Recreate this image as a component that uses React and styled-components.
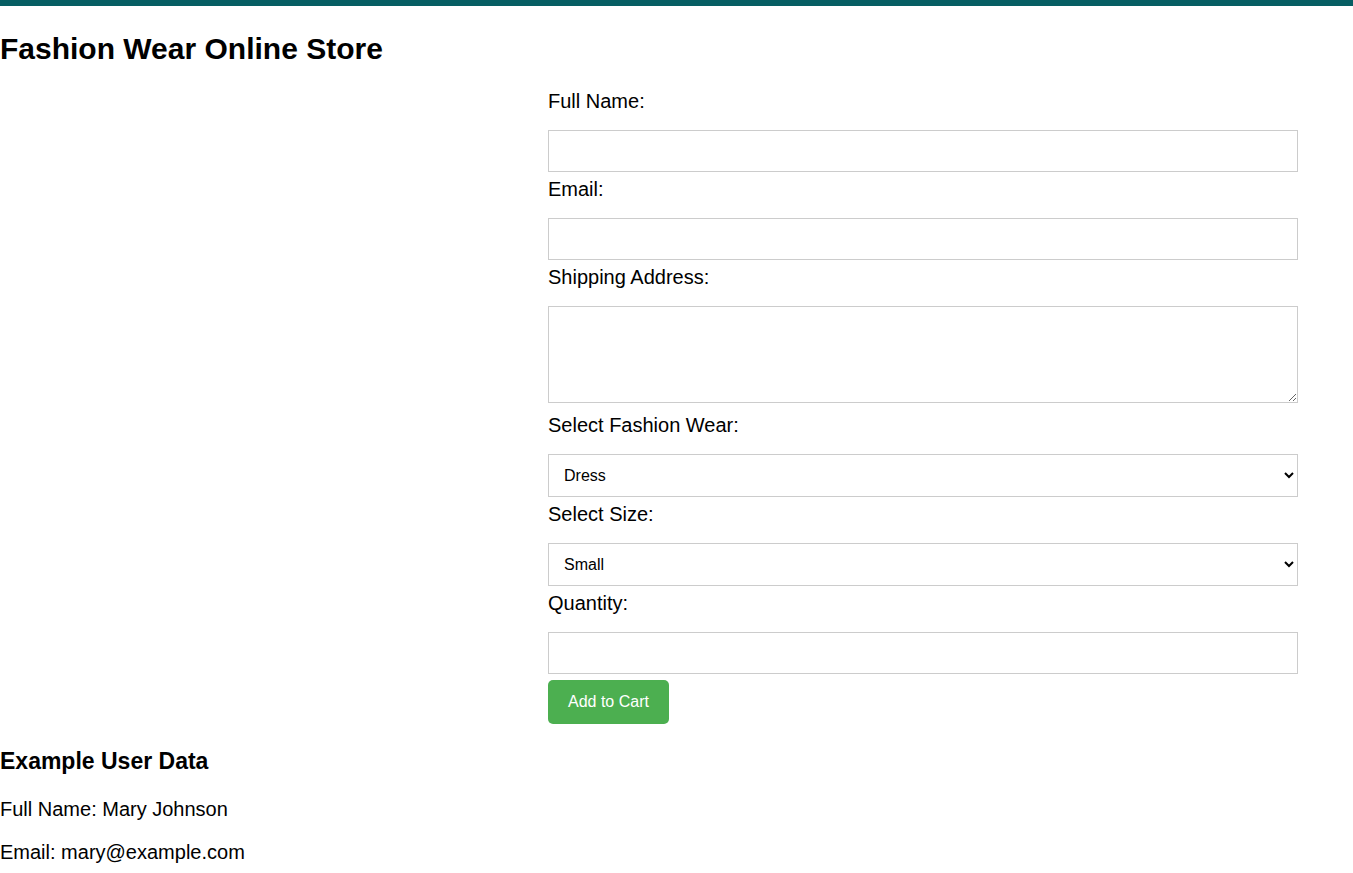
import React from 'react'
import styled, { createGlobalStyle } from 'styled-components'

const GlobalStyle = createGlobalStyle`
  body {
    margin: 0;
    font-family: "Liberation Sans", Arial, sans-serif;
    font-size: 20px;
    color: #000;
    background: #fff;
  }
`

const TopBar = styled.div`
  height: 6px;
  background-color: #065e63;
`

const Title = styled.h2`
  margin: 26px 0 24px;
  font-size: 30px;
  line-height: 34px;
  font-weight: bold;
`

const Form = styled.form`
  width: 750px;
  margin-left: 548px;
`

const Label = styled.label`
  display: block;
  margin: ${p => (p.$afterArea ? '11px' : '6px')} 0 17px;
  line-height: 23px;
  font-size: 20px;
`

const fieldBase = `
  display: block;
  width: 100%;
  box-sizing: border-box;
  border: 1px solid #ccc;
  border-radius: 0;
  font-family: "Liberation Sans", Arial, sans-serif;
  font-size: 16px;
  background: #fff;
  outline: none;
`

const Input = styled.input`
  ${fieldBase}
  height: 42px;
  padding: 0 10px;
`

const TextArea = styled.textarea`
  ${fieldBase}
  height: 97px;
  padding: 10px;
  resize: vertical;
`

const Select = styled.select`
  ${fieldBase}
  height: 43px;
  padding: 0 11px;
  color: #000;
`

const Button = styled.button`
  display: block;
  margin-top: 6px;
  height: 44px;
  padding: 0 20px;
  border: none;
  border-radius: 5px;
  background-color: #4caf50;
  color: #fff;
  font-family: "Liberation Sans", Arial, sans-serif;
  font-size: 16px;
  cursor: pointer;
`

const SubTitle = styled.h3`
  margin: 25px 0 25px;
  font-size: 23px;
  line-height: 24px;
  font-weight: bold;
`

const DataLine = styled.p`
  margin: 0 0 20px;
  line-height: 23px;
`

export default function App() {
  return (
    <>
      <GlobalStyle />
      <TopBar />
      <Title>Fashion Wear Online Store</Title>
      <Form onSubmit={e => e.preventDefault()}>
        <Label htmlFor="name">Full Name:</Label>
        <Input id="name" type="text" />
        <Label htmlFor="email">Email:</Label>
        <Input id="email" type="email" />
        <Label htmlFor="address">Shipping Address:</Label>
        <TextArea id="address" />
        <Label htmlFor="wear" $afterArea>Select Fashion Wear:</Label>
        <Select id="wear" defaultValue="dress">
          <option value="dress">Dress</option>
          <option value="shirt">Shirt</option>
          <option value="pants">Pants</option>
        </Select>
        <Label htmlFor="size">Select Size:</Label>
        <Select id="size" defaultValue="small">
          <option value="small">Small</option>
          <option value="medium">Medium</option>
          <option value="large">Large</option>
        </Select>
        <Label htmlFor="qty">Quantity:</Label>
        <Input id="qty" type="number" />
        <Button type="submit">Add to Cart</Button>
      </Form>
      <SubTitle>Example User Data</SubTitle>
      <DataLine>Full Name: Mary Johnson</DataLine>
      <DataLine>Email: mary@example.com</DataLine>
    </>
  )
}
